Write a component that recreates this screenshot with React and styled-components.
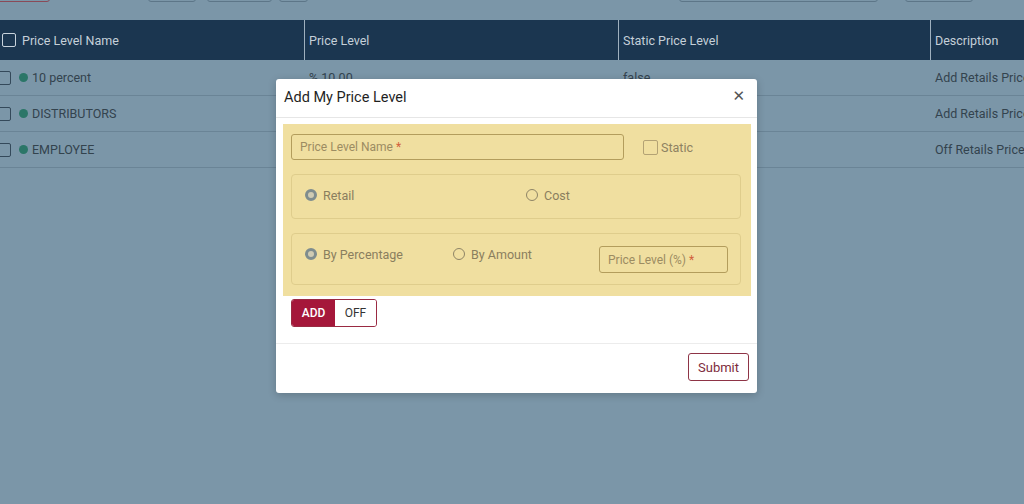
import { createGlobalStyle, styled } from "styled-components";

const GlobalStyle = createGlobalStyle`
  html, body {
    margin: 0;
    padding: 0;
    width: 1024px;
    height: 504px;
    overflow: hidden;
    font-family: Roboto, "Liberation Sans", sans-serif;
  }
`;

const Page = styled.div`
  position: relative;
  width: 1024px;
  height: 504px;
  background: #7b96a8;
  overflow: hidden;
`;

const Toolbar = styled.div`
  height: 20px;
  position: relative;
  overflow: hidden;
`;

const GhostButton = styled.div`
  position: absolute;
  top: -26px;
  left: ${(p) => p.left}px;
  width: ${(p) => p.width}px;
  height: 28px;
  border: 1px solid ${(p) => (p.red ? "#8a4a58" : "#5d7688")};
  border-radius: 3px;
  box-sizing: border-box;
`;

const Table = styled.div`
  display: grid;
  grid-template-columns: 304px 314px 312px 1fr;
`;

const HeadCell = styled.div`
  height: 40px;
  background: #1b3650;
  color: #c5d0d9;
  font-size: 12.5px;
  display: flex;
  align-items: center;
  gap: 6px;
  padding-left: ${(p) => (p.first ? "2px" : "4px")};
  border-left: ${(p) => (p.first ? "none" : "1px solid #9fb0be")};
  white-space: nowrap;
  overflow: hidden;
`;

const Cell = styled.div`
  height: 35px;
  border-bottom: 1px solid #6a8496;
  color: #33434e;
  font-size: 12.5px;
  display: flex;
  align-items: center;
  gap: 4px;
  padding-left: ${(p) => (p.first ? "0" : "5px")};
  white-space: nowrap;
  overflow: hidden;
`;

const Box = styled.span`
  display: inline-block;
  width: 12px;
  height: 12px;
  border: 1px solid ${(p) => (p.light ? "#c8d3dc" : "#34495a")};
  border-radius: 2px;
  flex: none;
  margin-left: ${(p) => (p.cut ? "-3px" : "0")};
  margin-right: ${(p) => (p.cut ? "4px" : "0")};
`;

const Dot = styled.span`
  width: 9px;
  height: 9px;
  border-radius: 50%;
  background: #2b7668;
  flex: none;
`;

const Modal = styled.div`
  position: absolute;
  left: 276px;
  top: 79px;
  width: 481px;
  background: #fff;
  border-radius: 3px;
  box-shadow: 0 2px 8px rgba(0, 0, 0, 0.2);
`;

const ModalHeader = styled.div`
  height: 38px;
  display: flex;
  align-items: center;
  justify-content: space-between;
  padding: 0 12px 0 8px;
  border-bottom: 1px solid #e6e6e6;
`;

const Title = styled.div`
  font-size: 14.5px;
  color: #1f1f1f;
  margin-top: -2px;
`;

const Close = styled.span`
  font-family: "DejaVu Sans", sans-serif;
  font-size: 15px;
  color: #555;
  line-height: 1;
  margin-top: -3px;
`;

const ModalBody = styled.div`
  padding: 6px 6px 16px 7px;
  border-bottom: 1px solid #ececec;
`;

const Panel = styled.div`
  background: #f0dfa0;
  padding: 10px 10px 11px 8px;
  display: flex;
  flex-direction: column;
  gap: 14px;
`;

const TopRow = styled.div`
  display: flex;
  align-items: center;
  gap: 19px;
`;

const Field = styled.div`
  width: ${(p) => p.width}px;
  height: ${(p) => p.height}px;
  box-sizing: border-box;
  border: 1px solid #b39d5c;
  border-radius: 3px;
  display: flex;
  align-items: center;
  padding-left: 8px;
  font-size: 12px;
  color: #9c8c62;
  flex: none;
`;

const Req = styled.span`
  color: #d2603c;
  margin-left: 3px;
`;

const CheckLabel = styled.label`
  display: flex;
  align-items: center;
  gap: 3px;
  font-size: 12.5px;
  color: #8e8262;
`;

const CheckBox = styled.span`
  width: 13px;
  height: 13px;
  border: 1px solid #b3a274;
  border-radius: 2px;
`;

const Group = styled.div`
  box-sizing: border-box;
  height: ${(p) => p.height}px;
  border: 1px solid #dfcd8c;
  border-radius: 4px;
  display: flex;
  align-items: flex-start;
  padding: 12px 0 0 13px;
`;

const RadioItem = styled.label`
  width: ${(p) => p.width}px;
  height: 16px;
  display: flex;
  align-items: center;
  gap: 6px;
  font-size: 12.5px;
  color: #8a7e5e;
  flex: none;
`;

const Radio = styled.span`
  width: 12px;
  height: 12px;
  box-sizing: border-box;
  border-radius: 50%;
  border: ${(p) => (p.checked ? "3px solid #7f8d8e" : "1px solid #8e8466")};
  background: ${(p) => (p.checked ? "#cfcbb3" : "transparent")};
  flex: none;
`;

const ToggleRow = styled.div`
  display: flex;
  padding: 3px 0 0 8px;
`;

const Toggle = styled.div`
  display: flex;
  box-sizing: border-box;
  height: 28px;
  border: 1px solid #9a2a42;
  border-radius: 3px;
  overflow: hidden;
`;

const ToggleOpt = styled.div`
  width: ${(p) => p.width}px;
  display: flex;
  align-items: center;
  justify-content: center;
  font-size: 12px;
  font-weight: ${(p) => (p.active ? 500 : 400)};
  background: ${(p) => (p.active ? "#a5173a" : "#fff")};
  color: ${(p) => (p.active ? "#fff" : "#333")};
`;

const Footer = styled.div`
  height: 49px;
  box-sizing: border-box;
  display: flex;
  align-items: flex-start;
  justify-content: flex-end;
  padding: 9px 8px 0 0;
`;

const SubmitButton = styled.button`
  height: 28px;
  padding: 0 9px;
  background: #fff;
  border: 1px solid #8e3446;
  border-radius: 3px;
  color: #7e2c3c;
  font-family: Roboto, "Liberation Sans", sans-serif;
  font-size: 13px;
`;

const rows = [
  ["10 percent", "% 10.00", "false", "Add Retails Price 10%"],
  ["DISTRIBUTORS", "% 5.00", "false", "Add Retails Price 5%"],
  ["EMPLOYEE", "% 15.00", "false", "Off Retails Price 15%"],
];

const ghosts = [
  { left: -20, width: 70, red: true },
  { left: 148, width: 48 },
  { left: 207, width: 65 },
  { left: 279, width: 29 },
  { left: 679, width: 199 },
  { left: 905, width: 68 },
];

export default function App() {
  return (
    <Page>
      <GlobalStyle />
      <Toolbar>
        {ghosts.map((g, i) => (
          <GhostButton key={i} left={g.left} width={g.width} red={g.red} />
        ))}
      </Toolbar>
      <Table>
        <HeadCell first>
          <Box light />
          Price Level Name
        </HeadCell>
        <HeadCell>Price Level</HeadCell>
        <HeadCell>Static Price Level</HeadCell>
        <HeadCell>Description</HeadCell>
        {rows.map((r) => (
          <>
            <Cell first key={r[0]}>
              <Box cut />
              <Dot />
              {r[0]}
            </Cell>
            <Cell>{r[1]}</Cell>
            <Cell>{r[2]}</Cell>
            <Cell>{r[3]}</Cell>
          </>
        ))}
      </Table>

      <Modal>
        <ModalHeader>
          <Title>Add My Price Level</Title>
          <Close>✕</Close>
        </ModalHeader>
        <ModalBody>
          <Panel>
            <TopRow>
              <Field width={333} height={26}>
                Price Level Name<Req>*</Req>
              </Field>
              <CheckLabel>
                <CheckBox />
                Static
              </CheckLabel>
            </TopRow>
            <Group height={45}>
              <RadioItem width={221}>
                <Radio checked />
                Retail
              </RadioItem>
              <RadioItem width={120}>
                <Radio />
                Cost
              </RadioItem>
            </Group>
            <Group height={52}>
              <RadioItem width={148}>
                <Radio checked />
                By Percentage
              </RadioItem>
              <RadioItem width={146}>
                <Radio />
                By Amount
              </RadioItem>
              <Field width={129} height={27}>
                Price Level (%)<Req>*</Req>
              </Field>
            </Group>
          </Panel>
          <ToggleRow>
            <Toggle>
              <ToggleOpt active width={43}>
                ADD
              </ToggleOpt>
              <ToggleOpt width={41}>OFF</ToggleOpt>
            </Toggle>
          </ToggleRow>
        </ModalBody>
        <Footer>
          <SubmitButton>Submit</SubmitButton>
        </Footer>
      </Modal>
    </Page>
  );
}
